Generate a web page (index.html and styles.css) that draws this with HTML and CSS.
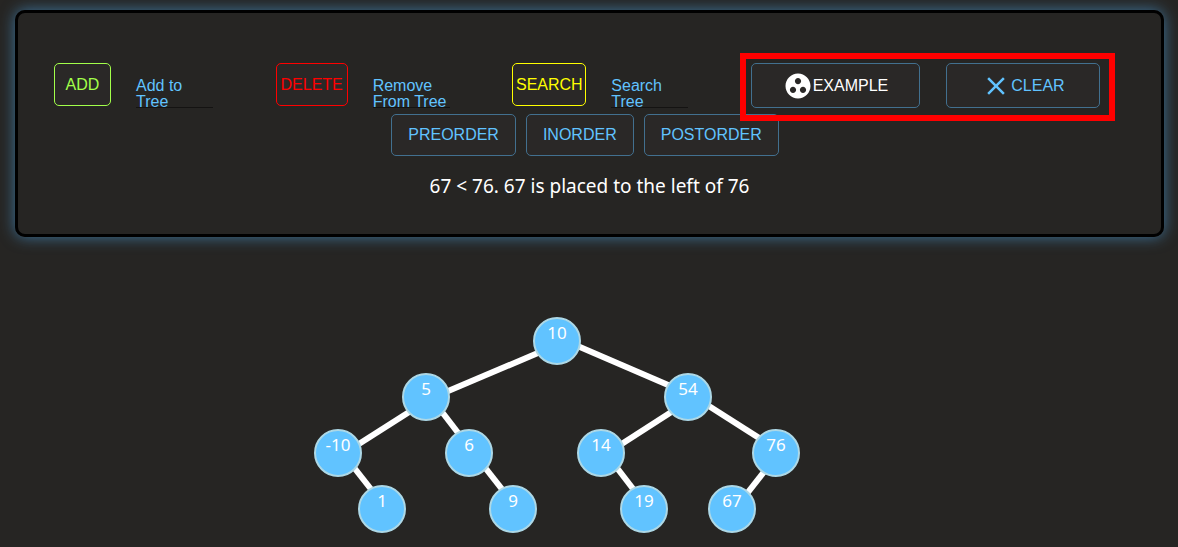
FILE: index.html
```html
<!DOCTYPE html>
<html lang="en">
<head>
<meta charset="utf-8">
<meta name="viewport" content="width=device-width, initial-scale=1">
<title>Binary Search Tree</title>
<link rel="stylesheet" href="styles.css">
</head>
<body>
<section class="panel">
  <div class="toolbar">
    <form class="group">
      <button class="btn btn-add" type="button">ADD</button>
      <div class="field">
        <label for="add">Add to Tree</label>
        <input id="add" type="text">
      </div>
    </form>
    <form class="group">
      <button class="btn btn-delete" type="button">DELETE</button>
      <div class="field">
        <label for="remove">Remove From Tree</label>
        <input id="remove" type="text">
      </div>
    </form>
    <form class="group">
      <button class="btn btn-search" type="button">SEARCH</button>
      <div class="field">
        <label for="search">Search Tree</label>
        <input id="search" type="text">
      </div>
    </form>
    <div class="group highlighted">
      <button class="btn btn-tall btn-example" type="button">
        <svg class="icon" viewBox="0 0 24 24" aria-hidden="true"><path d="M12 2C6.480 2 2 6.480 2 12s4.480 10 10 10 10-4.480 10-10S17.520 2 12 2zM8 17.500c-1.380 0-2.500-1.120-2.500-2.500s1.120-2.500 2.500-2.500 2.500 1.120 2.500 2.500-1.120 2.500-2.500 2.500zM9.500 8c0-1.380 1.120-2.500 2.500-2.500s2.500 1.120 2.500 2.500-1.120 2.500-2.500 2.500S9.500 9.380 9.500 8zm6.500 9.500c-1.380 0-2.500-1.120-2.500-2.500s1.120-2.500 2.500-2.500 2.500 1.120 2.500 2.500-1.120 2.500-2.500 2.500z"/></svg>EXAMPLE</button>
      <button class="btn btn-tall btn-clear" type="button">
        <svg class="icon" viewBox="0 0 24 24" aria-hidden="true"><path d="M19 6.410 17.590 5 12 10.590 6.410 5 5 6.410 10.590 12 5 17.590 6.410 19 12 13.410 17.590 19 19 17.590 13.410 12z"/></svg>CLEAR</button>
    </div>
  </div>
  <div class="orders">
    <button class="btn" type="button">PREORDER</button>
    <button class="btn" type="button">INORDER</button>
    <button class="btn" type="button">POSTORDER</button>
  </div>
  <p class="message">67 &lt; 76. 67 is placed to the left of 76</p>
</section>
<main class="stage">
  <svg class="tree" viewBox="312 315 490 220" role="img" aria-label="Binary search tree">
    <g class="edges">
      <path d="M559 344 427 400"/>
      <path d="M559 338 689 394"/>
      <path d="M428 400 340 456"/>
      <path d="M429 395 472 451"/>
      <path d="M690 400 603 456"/>
      <path d="M690 394 778 450"/>
      <path d="M341 451 385 507"/>
      <path d="M472 451 516 507"/>
      <path d="M604 451 647 507"/>
      <path d="M778 454 734 510"/>
    </g>
    <g class="nodes">
      <circle cx="557" cy="341" r="23"/>
      <circle cx="426" cy="397" r="23"/>
      <circle cx="688" cy="397" r="23"/>
      <circle cx="338" cy="453" r="23"/>
      <circle cx="469" cy="453" r="23"/>
      <circle cx="601" cy="453" r="23"/>
      <circle cx="776" cy="453" r="23"/>
      <circle cx="382" cy="509" r="23"/>
      <circle cx="513" cy="509" r="23"/>
      <circle cx="644" cy="509" r="23"/>
      <circle cx="732" cy="509" r="23"/>
    </g>
    <g class="values">
      <text x="557" y="339">10</text>
      <text x="426" y="395">5</text>
      <text x="688" y="395">54</text>
      <text x="338" y="451">-10</text>
      <text x="469" y="451">6</text>
      <text x="601" y="451">14</text>
      <text x="776" y="451">76</text>
      <text x="382" y="507">1</text>
      <text x="513" y="507">9</text>
      <text x="644" y="507">19</text>
      <text x="732" y="507">67</text>
    </g>
  </svg>
</main>
</body>
</html>
```

FILE: styles.css
```css
* {
  box-sizing: border-box;
}

body {
  margin: 0;
  padding: 10px 14px 0 15px;
  background: #262523;
  color: #fff;
  font-family: "Noto Sans", "Open Sans", sans-serif;
}

.panel {
  padding: 50px 0 34px;
  border: 3px solid #000;
  border-radius: 10px;
  box-shadow: 0 0 15px rgba(80, 180, 255, 0.55);
}

.toolbar {
  display: flex;
  justify-content: space-between;
  align-items: flex-start;
  padding: 0 61px 0 36px;
}

.group {
  display: flex;
  align-items: flex-start;
  gap: 25px;
}

.btn {
  display: inline-flex;
  align-items: center;
  justify-content: center;
  height: 43px;
  padding: 0 16px;
  border: 1px solid #42708f;
  border-radius: 5px;
  background: #2a2827;
  color: #61c3ff;
  font: 16px/24px "Liberation Sans", Arial, sans-serif;
}

.btn-add {
  width: 57px;
  padding: 0;
  border-color: #a2ff4a;
  color: #a2ff4a;
}

.btn-delete {
  width: 72px;
  padding: 0;
  border-color: #f00;
  color: #f00;
}

.btn-search {
  width: 74px;
  padding: 0;
  border-color: #ff0;
  color: #ff0;
}

.btn-tall {
  height: 45px;
  padding: 0;
}

.btn-example {
  width: 169px;
  color: #fff;
}

.btn-clear {
  width: 154px;
}

.icon {
  width: 30px;
  height: 30px;
  fill: currentColor;
}

.field {
  position: relative;
  width: 77px;
}

.field label {
  position: absolute;
  top: 15px;
  left: 0;
  width: 100%;
  color: #61c3ff;
  font: 16px/16px "Liberation Sans", Arial, sans-serif;
  pointer-events: none;
}

.field input {
  display: block;
  width: 100%;
  height: 45px;
  padding: 0;
  border: 0;
  border-bottom: 1px solid #141312;
  background: transparent;
  color: #61c3ff;
  font: 16px/16px "Liberation Sans", Arial, sans-serif;
}

.highlighted {
  position: relative;
  gap: 26px;
}

.highlighted::after {
  content: "";
  position: absolute;
  inset: -10px -15px -13px -11px;
  border: 6px solid #f00;
  pointer-events: none;
}

.orders {
  display: flex;
  justify-content: center;
  gap: 10px;
  margin-top: 6px;
  padding-right: 9px;
}

.orders .btn {
  height: 42px;
}

.message {
  margin: 16px 0 0;
  font-size: 19px;
  line-height: 28px;
  text-align: center;
}

.stage {
  display: flex;
  justify-content: center;
  margin-top: 78px;
  padding-right: 65px;
}

.tree {
  width: 490px;
  height: 220px;
}

.edges {
  stroke: #fff;
  stroke-width: 6px;
}

.nodes {
  fill: #61c3ff;
  stroke: #add8e6;
  stroke-width: 2px;
}

.values {
  fill: #fff;
  font-size: 17px;
  text-anchor: middle;
}
```
